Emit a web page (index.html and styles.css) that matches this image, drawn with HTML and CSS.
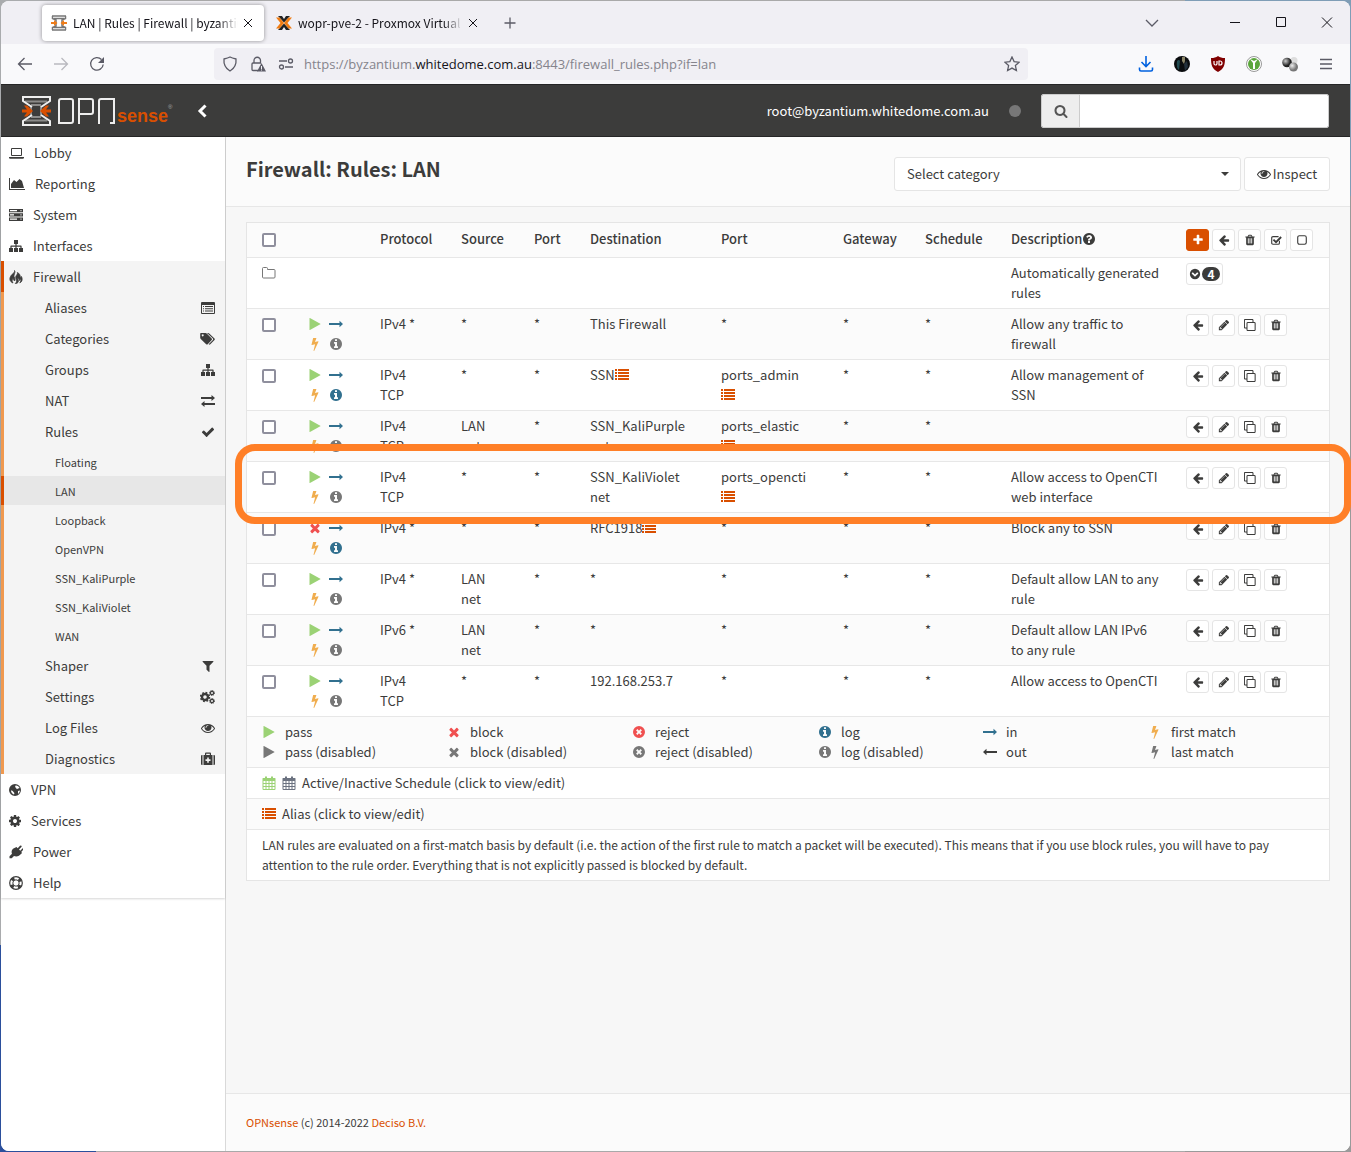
FILE: index.html
```
<!DOCTYPE html>
<html lang="en">
<head>
<meta charset="utf-8">
<title>LAN | Rules | Firewall | byzantium</title>
<link rel="stylesheet" href="styles.css">
</head>
<body>
<svg class="sprite" aria-hidden="true">
  <symbol id="search" viewBox="0 0 1792 1792"><path d="M1216 832q0-185-131.5-316.5t-316.5-131.5-316.5 131.5-131.5 316.5 131.5 316.5 316.5 131.5 316.5-131.5 131.5-316.5zm512 832q0 52-38 90t-90 38q-54 0-90-38l-343-342q-179 124-399 124-143 0-273.5-55.5t-225-150-150-225-55.5-273.5 55.5-273.5 150-225 225-150 273.5-55.5 273.5 55.5 225 150 150 225 55.5 273.5q0 220-124 399l343 343q37 37 37 90z"/></symbol>
  <symbol id="eye" viewBox="0 0 1792 1792"><path d="M1664 960q-152-236-381-353 61 104 61 225 0 185-131.5 316.5t-316.5 131.5-316.5-131.5-131.5-316.5q0-121 61-225-229 117-381 353 133 205 333.5 326.5t434.5 121.5 434.5-121.5 333.5-326.5zm-720-384q0-20-14-34t-34-14q-125 0-214.5 89.5t-89.5 214.5q0 20 14 34t34 14 34-14 14-34q0-86 61-147t147-61q20 0 34-14t14-34zm848 384q0 34-20 69-140 230-376.5 368.5t-499.5 138.5-499.5-139-376.5-368q-20-35-20-69t20-69q140-229 376.5-368t499.5-139 499.5 139 376.5 368q20 35 20 69z"/></symbol>
  <symbol id="check" viewBox="0 0 1792 1792"><path d="M1671 566q0 40-28 68l-724 724-136 136q-28 28-68 28t-68-28l-136-136-362-362q-28-28-28-68t28-68l136-136q28-28 68-28t68 28l294 295 656-657q28-28 68-28t68 28l136 136q28 28 28 68z"/></symbol>
  <symbol id="plus" viewBox="0 0 1792 1792"><path d="M1600 736v192q0 40-28 68t-68 28h-416v416q0 40-28 68t-68 28h-192q-40 0-68-28t-28-68v-416h-416q-40 0-68-28t-28-68v-192q0-40 28-68t68-28h416v-416q0-40 28-68t68-28h192q40 0 68 28t28 68v416h416q40 0 68 28t28 68z"/></symbol>
  <symbol id="left" viewBox="0 0 1792 1792"><path d="M1664 896v128q0 53-32.5 90.5t-84.5 37.5h-704l293 294q38 36 38 90t-38 90l-75 76q-37 37-90 37-52 0-91-37l-651-652q-37-37-37-90 0-52 37-91l651-650q38-38 91-38 52 0 90 38l75 74q38 38 38 91t-38 91l-293 293h704q52 0 84.5 37.5t32.5 90.5z"/></symbol>
  <symbol id="times" viewBox="0 0 1792 1792"><path d="M1490 1322q0 40-28 68l-136 136q-28 28-68 28t-68-28l-294-294-294 294q-28 28-68 28t-68-28l-136-136q-28-28-28-68t28-68l294-294-294-294q-28-28-28-68t28-68l136-136q28-28 68-28t68 28l294 294 294-294q28-28 68-28t68 28l136 136q28 28 28 68t-28 68l-294 294 294 294q28 28 28 68z"/></symbol>
  <symbol id="play" viewBox="0 0 1792 1792"><path d="M1576 927l-1328 738q-23 13-39.5 3t-16.5-36v-1472q0-26 16.5-36t39.5 3l1328 738q23 13 23 31t-23 31z"/></symbol>
  <symbol id="cog" viewBox="128 0 1536 1792"><path d="M1152 896q0-106-75-181t-181-75-181 75-75 181 75 181 181 75 181-75 75-181zm512-109v222q0 12-8 23t-20 13l-185 28q-19 54-39 91 35 50 107 138 10 12 10 25t-9 23q-27 37-99 108t-94 71q-12 0-26-9l-138-108q-44 23-91 38-16 136-29 186-7 28-36 28h-222q-14 0-24.5-8.5t-11.5-21.5l-28-184q-49-16-90-37l-141 107q-10 9-25 9-14 0-25-11-126-114-165-168-7-10-7-23 0-12 8-23 15-21 51-66.5t54-70.5q-27-50-41-99l-183-27q-13-2-21-12.5t-8-23.5v-222q0-12 8-23t19-13l186-28q14-46 39-92-40-57-107-138-10-12-10-24 0-10 9-23 26-36 98.5-107.5t94.5-71.5q13 0 26 10l138 107q44-23 91-38 16-136 29-186 7-28 36-28h222q14 0 24.5 8.5t11.5 21.5l28 184q49 16 90 37l142-107q9-9 24-9 13 0 25 10 129 119 165 170 7 8 7 22 0 12-8 23-15 21-51 66.5t-54 70.5q26 50 41 98l183 28q13 2 21 12.5t8 23.5z"/></symbol>
  <symbol id="filter" viewBox="0 0 1792 1792"><path d="M1595 295q17 41-14 70l-493 493v742q0 42-39 59-13 5-25 5-27 0-45-19l-256-256q-19-19-19-45v-486l-493-493q-31-29-14-70 17-39 59-39h1280q42 0 59 39z"/></symbol>
  <symbol id="pencil" viewBox="0 0 1792 1792"><path d="M491 1536l91-91-235-235-91 91v107h128v128h107zm523-928q0-22-22-22-10 0-17 7l-542 542q-7 7-7 17 0 22 22 22 10 0 17-7l542-542q7-7 7-17zm-54-192l416 416-832 832h-416v-416zm683 96q0 53-37 90l-166 166-416-416 166-165q36-38 90-38 53 0 91 38l235 234q37 39 37 91z"/></symbol>
  <symbol id="trash" viewBox="0 0 1792 1792"><path d="M704 1376v-704q0-14-9-23t-23-9h-64q-14 0-23 9t-9 23v704q0 14 9 23t23 9h64q14 0 23-9t9-23zm256 0v-704q0-14-9-23t-23-9h-64q-14 0-23 9t-9 23v704q0 14 9 23t23 9h64q14 0 23-9t9-23zm256 0v-704q0-14-9-23t-23-9h-64q-14 0-23 9t-9 23v704q0 14 9 23t23 9h64q14 0 23-9t9-23zm-544-992h448l-48-117q-7-9-17-11h-317q-10 2-17 11zm928 32v64q0 14-9 23t-23 9h-96v948q0 83-47 143.5t-113 60.5h-832q-66 0-113-58.5t-47-141.5v-952h-96q-14 0-23-9t-9-23v-64q0-14 9-23t23-9h309l70-167q15-37 54-63t79-26h320q40 0 79 26t54 63l70 167h309q14 0 23 9t9 23z"/></symbol>
  <symbol id="info" viewBox="0 0 1792 1792"><path d="M1152 1376v-160q0-14-9-23t-23-9h-96v-512q0-14-9-23t-23-9h-320q-14 0-23 9t-9 23v160q0 14 9 23t23 9h96v320h-96q-14 0-23 9t-9 23v160q0 14 9 23t23 9h448q14 0 23-9t9-23zm-128-896v-160q0-14-9-23t-23-9h-192q-14 0-23 9t-9 23v160q0 14 9 23t23 9h192q14 0 23-9t9-23zm640 416q0 209-103 385.5t-279.5 279.5-385.5 103-385.5-103-279.5-279.5-103-385.5 103-385.5 279.5-279.5 385.5-103 385.5 103 279.5 279.5 103 385.5z"/></symbol>
  <symbol id="question" viewBox="0 0 1792 1792"><path d="M1024 1376v-192q0-14-9-23t-23-9h-192q-14 0-23 9t-9 23v192q0 14 9 23t23 9h192q14 0 23-9t9-23zm256-672q0-88-55.5-163t-138.5-116-170-41q-243 0-371 213-15 24 8 42l132 100q7 6 19 6 16 0 25-12 53-68 86-92 34-24 86-24 48 0 85.5 26t37.5 59q0 38-20 61t-68 45q-63 28-115.5 86.5t-52.5 125.5v36q0 14 9 23t23 9h192q14 0 23-9t9-23q0-19 21.5-49.5t54.5-49.5q32-18 49-28.5t46-35 44.5-48 28-60.5 12.5-81zm384 192q0 209-103 385.5t-279.5 279.5-385.5 103-385.5-103-279.5-279.5-103-385.5 103-385.5 279.5-279.5 385.5-103 385.5 103 279.5 279.5 103 385.5z"/></symbol>
  <symbol id="bolt" viewBox="0 0 1792 1792"><path d="M1333 566q18 20 7 44l-540 1157q-13 25-42 25-4 0-14-2-17-5-25.5-19t-4.5-30l197-808-406 101q-4 1-12 1-18 0-31-11-18-15-13-39l201-825q4-14 16-23t28-9h328q19 0 32 12.5t13 29.5q0 8-5 18l-171 463 396-98q8-2 12-2 19 0 34 15z"/></symbol>
  <symbol id="circle-x" viewBox="0 0 14 14"><path fill-rule="evenodd" d="M7 1a6 6 0 1 1 0 12A6 6 0 0 1 7 1zM5.4 4.1 4.1 5.4 5.7 7 4.1 8.6l1.3 1.3L7 8.3l1.6 1.6 1.3-1.3L8.3 7l1.6-1.6-1.3-1.3L7 5.7z"/></symbol>
  <symbol id="circle-down" viewBox="0 0 14 14"><path fill-rule="evenodd" d="M7 1a6 6 0 1 1 0 12A6 6 0 0 1 7 1zM3 6.3 7 10.3l4-4-1.4-1.4L7 7.5 4.4 4.9z"/></symbol>
  <symbol id="right-long" viewBox="0 0 14 14"><path d="M0 6h10.5V3.800L14 7l-3.500 3.200V8H0z"/></symbol>
  <symbol id="left-long" viewBox="0 0 14 14"><path d="M14 6H3.500V3.800L0 7l3.500 3.200V8H14z"/></symbol>
  <symbol id="list" viewBox="0 0 14 14"><path d="M0 1h2v2H0zM3 1h11v2H3zM0 4h2v2H0zM3 4h11v2H3zM0 7h2v2H0zM3 7h11v2H3zM0 10h2v2H0zM3 10h11v2H3z"/></symbol>
  <symbol id="calendar" viewBox="0 0 14 14"><path fill-rule="evenodd" d="M1 2h2V.5h2V2h4V.5h2V2h2q.5 0 .5.5V13q0 1-1 1h-11q-1 0-1-1V2.5Q.5 2 1 2zM1.500 5v2h2V5zM4.500 5v2h2V5zM7.500 5v2h2V5zM10.500 5v2h2V5zM1.500 8v2h2V8zM4.500 8v2h2V8zM7.500 8v2h2V8zM10.500 8v2h2V8zM1.500 11v2h2v-2zM4.500 11v2h2v-2zM7.500 11v2h2v-2zM10.500 11v2h2v-2z"/></symbol>
  <symbol id="folder" viewBox="0 0 14 14"><path fill="none" stroke="currentColor" d="M.5 2.500q0-1 1-1h3q1 0 1 1v1h6.500q1 0 1 1v6.500q0 1-1 1H1.500q-1 0-1-1z"/></symbol>
  <symbol id="clone" viewBox="0 0 14 14"><path fill="none" stroke="currentColor" stroke-width="1.2" d="M4.500 4h7.500q1 0 1 1v7.500q0 1-1 1H4.500q-1 0-1-1V5q0-1 1-1zM3.500 10.500h-2q-1 0-1-1V1.500q0-1 1-1h8q1 0 1 1V4"/></symbol>
  <symbol id="square" viewBox="0 0 14 14"><rect x="2" y="2" width="10" height="10" rx="2" fill="none" stroke="currentColor" stroke-width="1.3"/></symbol>
  <symbol id="check-square" viewBox="0 0 14 14"><path fill="none" stroke="currentColor" stroke-width="1.3" d="M11 8v2.500q0 1.500-1.500 1.500h-6Q2 12 2 10.500v-6Q2 3 3.500 3H10"/><path fill="none" stroke="currentColor" stroke-width="2.2" d="m4 6.500 3 3L13 3.500"/></symbol>
  <symbol id="laptop" viewBox="0 0 15 14"><path fill-rule="evenodd" d="M3 2h9q1 0 1 1v6q0 1-1 1H3q-1 0-1-1V3q0-1 1-1zm0 1v6h9V3zM0 11h15v.7q0 1-1.200 1H1.200Q0 12.700 0 11.700z"/></symbol>
  <symbol id="area" viewBox="0 0 16 14"><path d="M0 1h1v11h15v1H0zM2 11V7l3-4 2.500 2L10.500 2 13 4l2 7z"/></symbol>
  <symbol id="server" viewBox="0 0 14 14"><path fill-rule="evenodd" d="M0 1h14v3.300H0zm1 1v1.200h7V2zm10.500 0v1.200h1V2zM0 5.300h14v3.300H0zm1 1v1.200h4V6.300zm10.500 0v1.200h1V6.300zM0 9.600h14v3.300H0zm1 1v1.200h7v-1.200zm10.500 0v1.200h1v-1.200z"/></symbol>
  <symbol id="sitemap" viewBox="0 0 14 14"><path d="M5 1h4v4H7.600v1.500H12q.6 0 .6.6V9H14v4h-4V9h1.400V7.700H7.600V9H9v4H5V9h1.400V7.700H2.600V9H4v4H0V9h1.400V7.100q0-.6.6-.6h4.400V5H5z"/></symbol>
  <symbol id="fire" viewBox="0 0 14 14"><path stroke="currentColor" stroke-width=".8" d="M5.500.5C6.500 2.200 4 3.200 2.500 5-.2 8.500.6 11.600 4 13 2.600 11 3 9 4.500 8c-.3 1.500.3 2 1 3C6.500 10 6 8.500 5 6.500 4.500 4.500 6.800 3 5.500.5zM8.300 2.500C9 4 7.300 5 6.800 6.500 6.300 8.500 8 9.500 7.500 11.500 7.300 12.600 6.700 13.200 6.300 13.500c1.700 0 2.700-.7 3-1.800.5-1.700-.6-2.400-.5-3.700 1 .6 1.700 1.500 1.700 2.500.7-.7.8-1.500.6-2.300C12.200 9.500 12 11.700 10.800 12.800 13.300 11.800 13.700 9 12.500 6.500c-.3.7-.6 1-1.200 1.200C11.500 5.500 10.500 3.300 8.300 2.500z"/></symbol>
  <symbol id="listalt" viewBox="0 0 14 14"><path fill-rule="evenodd" d="M1 1h12q1 0 1 1v10q0 1-1 1H1q-1 0-1-1V2q0-1 1-1zm0 3v8h12V4zm1 1h1v1H2zm2 0h8v1H4zM2 7.200h1v1H2zm2 0h8v1H4zM2 9.400h1v1H2zm2 0h8v1H4z"/></symbol>
  <symbol id="tags" viewBox="0 0 15 14"><path fill-rule="evenodd" d="M1 1h4.500q.8 0 1.500.7l4.700 4.800q.7.8 0 1.500l-4 4.200q-.7.7-1.500 0L1 7.200Q.2 6.500.2 5.500V1.800Q.2 1 1 1zm1.700 1.300a1 1 0 1 0 .01 0z"/><path d="M7 1h1q.8 0 1.500.7l5 4.800q.7.8 0 1.500l-4.200 4.300q-.9.7-1.600-.1l4.200-4.200q.6-.7 0-1.500z"/></symbol>
  <symbol id="exchange" viewBox="0 0 14 14"><path d="M0 3h10.500V1L14 4l-3.500 3V5H0zM14 9H3.500V7L0 10l3.500 3v-2H14z"/></symbol>
  <symbol id="cogs" viewBox="0 0 15 14"><g fill="none" stroke="currentColor"><circle cx="5" cy="7" r="3" stroke-width="2.4"/><circle cx="5" cy="7" r="4.5" stroke-width="1.5" stroke-dasharray="1.8 1.734"/><circle cx="12" cy="3" r="1.6" stroke-width="1.2"/><circle cx="12" cy="3" r="2.5" stroke-dasharray="1.1 .863"/><circle cx="12" cy="11" r="1.6" stroke-width="1.2"/><circle cx="12" cy="11" r="2.5" stroke-dasharray="1.1 .863"/></g></symbol>
  <symbol id="medkit" viewBox="0 0 14 14"><path fill-rule="evenodd" d="M0 4q0-1 1-1h.5v10H1q-1 0-1-1zM2.500 3H4V1.500Q4 .5 5 .5h4q1 0 1 1V3h1.500v10h-9zM5.200 3h3.600V1.700H5.200zm1 2.500v1.700H4.500V9h1.700v1.700h1.600V9h1.700V7.200H7.800V5.500zM12.500 3h.5q1 0 1 1v8q0 1-1 1h-.5z"/></symbol>
  <symbol id="globe" viewBox="0 0 12 14"><path fill-rule="evenodd" d="M6 1a6 6 0 1 1 0 12A6 6 0 0 1 6 1zM6.500 2.500C8 2 10 3.500 10.700 5c-1 .5-2 .3-2.700 1.200C7 5.500 7.500 4.500 6 4.200zM2 7.500c1 .1 1.800.4 2.500 1.500.8.600 1.200 1.200.5 2.500C3.500 11 2 9.500 2 7.500zM9 8l2-.5c-.2 1.500-1 2.700-2 3.500z"/></symbol>
  <symbol id="plug" viewBox="0 0 14 14"><path d="m7.500 2 1.200 1.200L11 .8q.9-.6 1.400 0 .5.7 0 1.300L10 4.500l1.300 1.300L13.400 3.500q.6-.4 1 .1.400.6-.1 1.200L12.200 7l.9.9-.9.900C10.500 11 7.700 12 5 11l-2.300 2.200H.5v-2L3 8.800C2 6.500 3 4 5 3.200z"/></symbol>
  <symbol id="ring" viewBox="0 0 14 14"><g fill="none" stroke="currentColor"><circle cx="7" cy="7" r="6.3" stroke-width="1.2"/><circle cx="7" cy="7" r="3.2" stroke-width="1"/><circle cx="7" cy="7" r="4.7" stroke-width="3" stroke-dasharray="3 4.383" stroke-dashoffset="-2.2"/></g></symbol>
</svg>

<div class="window">
  <div class="tabstrip">
    <div class="tab active">
      <svg class="favicon" viewBox="0 0 16 16"><path fill="none" stroke="#777" stroke-width="1.5" d="M1 1h14M1 15h14M1.500 1v2.500L5 5v6l-3.500 1.500V15M14.500 1v2.500L11 5v6l3.500 1.500V15M3 3.500h10M3 12.500h10"/><path fill="#ef7d1a" d="M0 7h3V5l3.500 3L3 11V9H0zM16 7h-3V5L9.500 8l3.500 3V9h3z"/></svg>
      <span class="title">LAN | Rules | Firewall | byzantium</span>
      <button class="plain close" aria-label="Close tab"><svg viewBox="0 0 10 10"><path d="m1 1 8 8M9 1 1 9"/></svg></button>
    </div>
    <div class="tab">
      <svg class="favicon" viewBox="0 0 16 16"><path fill="#222" d="M2 1h4l2 3 2-3h4L8 7.500zM2 15h4l2-3 2 3h4L8 8.500z"/><path fill="#f07c12" d="M0 2.500h3.500L8 8l-4.500 5.500H0L4.500 8zM16 2.500h-3.500L8 8l4.500 5.500H16L11.500 8z"/></svg>
      <span class="title">wopr-pve-2 - Proxmox Virtual E</span>
      <button class="plain close" aria-label="Close tab"><svg viewBox="0 0 10 10"><path d="m1 1 8 8M9 1 1 9"/></svg></button>
    </div>
    <button class="plain tool" aria-label="New tab"><svg class="line" viewBox="0 0 16 16"><path d="M8 2.500v11M2.500 8h11"/></svg></button>
    <div class="controls">
      <button class="plain list-tabs" aria-label="List all tabs"><svg class="line" viewBox="0 0 16 16"><path d="m2 5 6 6 6-6"/></svg></button>
      <button class="plain" aria-label="Minimize"><svg class="line dark" viewBox="0 0 16 16"><path d="M3 7.500h10"/></svg></button>
      <button class="plain" aria-label="Maximize"><svg class="line dark" viewBox="0 0 16 16"><path d="M3.500 2.500h9v9h-9z"/></svg></button>
      <button class="plain" aria-label="Close"><svg class="line dark" viewBox="0 0 16 16"><path d="m3 2.500 10 10M13 2.500 3 12.500"/></svg></button>
    </div>
  </div>

  <div class="toolbar">
    <button class="plain tool" aria-label="Back"><svg class="line" viewBox="0 0 16 16"><path d="M15 8H1.500M7.500 2 1.500 8l6 6"/></svg></button>
    <button class="plain tool dim" aria-label="Forward"><svg class="line" viewBox="0 0 16 16"><path d="M1 8h13.500M8.500 2l6 6-6 6"/></svg></button>
    <button class="plain tool" aria-label="Reload"><svg class="line" viewBox="0 0 16 16"><path d="M14.200 8.500A6.300 6.300 0 1 1 12.500 3.500"/><path fill="currentColor" stroke="none" d="M15 1v6H9z"/></svg></button>
    <div class="urlbar">
      <svg class="line" viewBox="0 0 16 16"><path d="M8 1c2 1 4 1.500 6 2 .5 5-1 9-6 12-5-3-6.500-7-6-12 2-.5 4-1 6-2z"/></svg>
      <svg class="line" viewBox="0 0 16 16"><path d="M4 7V4.500a3 3 0 0 1 6.500 0V7M8 14.500H3q-1 0-1-1V8q0-1 1-1h8"/><path fill="currentColor" stroke="none" fill-rule="evenodd" d="M11.500 7 16 15.500H7zm-.5 3v3h1v-3zm0 3.500v1h1v-1z"/></svg>
      <svg class="line" viewBox="0 0 16 16"><circle cx="12.500" cy="5" r="2"/><circle cx="3.500" cy="11" r="2"/><path d="M1 5h8M7 11h8"/></svg>
      <span class="url">https://byzantium.<b>whitedome.com.au</b>:8443/firewall_rules.php?if=lan</span>
      <svg class="line" viewBox="0 0 16 16"><path d="m8 1 2.100 4.600 5 .6-3.700 3.400 1 5L8 12.100l-4.400 2.500 1-5L.9 6.200l5-.6z"/></svg>
    </div>
    <button class="plain tool" aria-label="Downloads"><svg class="line blue" viewBox="0 0 16 16"><path d="M8 0v10.500M3.500 6 8 10.500 12.500 6M1.500 11.500v2q0 1.500 1.500 1.500h10q1.500 0 1.500-1.500v-2"/></svg></button>
    <button class="plain tool" aria-label="Account"><svg viewBox="0 0 16 16"><circle cx="8" cy="8" r="8" fill="#0a0c0e"/><path fill="#214a50" d="M3 5q2-2 3 0l-1 9q-3-2-2-9z"/><path fill="#8a8466" d="M8 1h3v4l-1 3-2-3z"/><path fill="#23303b" d="m10 8 3-3 1 6-3 4z"/></svg></button>
    <button class="plain tool" aria-label="uBlock"><svg viewBox="0 0 16 16"><path fill="#800000" d="M8 0c2 1.500 4 2 7 2 0 7-1 11-7 14C2 13 1 9 1 2c3 0 5-.5 7-2z"/><path fill="none" stroke="#fff" stroke-width="1.2" d="M4 5v2.500a1.500 1.500 0 0 0 3 0V5M9 5v4h1a2 2 0 0 0 0-4z"/></svg></button>
    <button class="plain tool" aria-label="Password manager"><svg viewBox="0 0 16 16"><circle cx="8" cy="8" r="7.5" fill="#fff" stroke="#999"/><circle cx="8" cy="8" r="6" fill="#5aa63a"/><path fill="#fff" d="M4 3l3 4v6h2V7l3-4-4 2z"/></svg></button>
    <button class="plain tool" aria-label="Extension"><svg viewBox="0 0 16 16"><defs><radialGradient id="ball" cx=".35" cy=".35"><stop offset="0" stop-color="#ccc"/><stop offset="1" stop-color="#222"/></radialGradient><radialGradient id="pale" cx=".35" cy=".35"><stop offset="0" stop-color="#eee"/><stop offset="1" stop-color="#777"/></radialGradient></defs><circle cx="12" cy="4.500" r="3.500" fill="#ddd"/><circle cx="5" cy="6.500" r="4.800" fill="url(#ball)"/><circle cx="11.500" cy="11" r="4.500" fill="url(#pale)"/></svg></button>
    <button class="plain tool" aria-label="Menu"><svg class="line" viewBox="0 0 16 16"><path d="M2 3.500h12M2 8h12M2 12.500h12"/></svg></button>
  </div>

  <header class="topbar">
    <a class="logo" href="#" aria-label="OPNsense">
      <svg viewBox="0 0 96 32"><g fill="none"><path stroke="#8b8b8a" stroke-width="2" d="M4 6.500h22M4 25.500h22M10 10h10M10 22h10M10 11v10M20 11v10"/><path stroke="#eee" stroke-width="2" d="M11 12 2 6V2h27v4l-9 6M11 20 2 26v4h27v-4l-9-6"/><path stroke="#eee" stroke-width="2" d="M40 4h10q2 0 2 2v20q0 2-2 2H38V6q0-2 2-2M58 29V4h12q2 0 2 2v11q0 2-2 2H59M78 29V6q0-2 2-2h13v24h-4"/></g><path fill="#d94f00" d="M1 14.500h5l-3-4h3l6 5.500-6 5.500H3l3-4H1zM30 14.500h-5l3-4h-3L19 16l6 5.500h3l-3-4h5z"/></svg><span class="sense">sense</span><sup>®</sup>
    </a>
    <button class="plain collapse" aria-label="Collapse menu"><svg viewBox="0 0 10 14"><path d="M8.500 1.500 3 7l5.500 5.500"/></svg></button>
    <span class="user">root@byzantium.whitedome.com.au</span>
    <span class="status"></span>
    <label class="search"><span><svg class="i"><use href="#search"/></svg></span><input type="text" aria-label="Search"></label>
  </header>

  <div class="columns">
    <nav class="sidebar">
      <div class="menu">
        <a href="#"><svg class="i w15"><use href="#laptop"/></svg>Lobby</a>
        <a href="#"><svg class="i w16"><use href="#area"/></svg>Reporting</a>
        <a href="#"><svg class="i"><use href="#server"/></svg>System</a>
        <a href="#"><svg class="i"><use href="#sitemap"/></svg>Interfaces</a>
        <a href="#" class="on"><svg class="i"><use href="#fire"/></svg>Firewall</a>
        <div class="submenu">
          <a href="#">Aliases<svg class="i"><use href="#listalt"/></svg></a>
          <a href="#">Categories<svg class="i w15"><use href="#tags"/></svg></a>
          <a href="#">Groups<svg class="i"><use href="#sitemap"/></svg></a>
          <a href="#">NAT<svg class="i"><use href="#exchange"/></svg></a>
          <a href="#">Rules<svg class="i"><use href="#check"/></svg></a>
          <a href="#" class="leaf">Floating</a>
          <a href="#" class="leaf on">LAN</a>
          <a href="#" class="leaf">Loopback</a>
          <a href="#" class="leaf">OpenVPN</a>
          <a href="#" class="leaf">SSN_KaliPurple</a>
          <a href="#" class="leaf">SSN_KaliViolet</a>
          <a href="#" class="leaf">WAN</a>
          <a href="#">Shaper<svg class="i"><use href="#filter"/></svg></a>
          <a href="#">Settings<svg class="i w15"><use href="#cogs"/></svg></a>
          <a href="#">Log Files<svg class="i"><use href="#eye"/></svg></a>
          <a href="#">Diagnostics<svg class="i"><use href="#medkit"/></svg></a>
        </div>
        <a href="#"><svg class="i w12"><use href="#globe"/></svg>VPN</a>
        <a href="#"><svg class="i w12"><use href="#cog"/></svg>Services</a>
        <a href="#"><svg class="i"><use href="#plug"/></svg>Power</a>
        <a href="#"><svg class="i"><use href="#ring"/></svg>Help</a>
      </div>
    </nav>

    <div class="page">
      <div class="heading">
        <h1>Firewall: Rules: LAN</h1>
        <div class="select"><select aria-label="Category"><option>Select category</option></select><svg viewBox="0 0 8 4"><path d="M0 0h8L4 4z"/></svg></div>
        <button class="inspect"><svg class="i"><use href="#eye"/></svg>Inspect</button>
      </div>

      <main>
        <table class="rules">
          <colgroup><col class="c-check"><col class="c-flags"><col class="c-proto"><col class="c-source"><col class="c-port"><col class="c-dest"><col class="c-dport"><col class="c-gateway"><col class="c-schedule"><col><col class="c-actions"></colgroup>
          <thead>
            <tr>
              <th><input type="checkbox" aria-label="Select all"></th><th></th><th>Protocol</th><th>Source</th><th>Port</th><th>Destination</th><th>Port</th><th>Gateway</th><th>Schedule</th>
              <th class="desc">Description<svg class="i"><use href="#question"/></svg></th>
              <th><div class="btns"><button class="add" aria-label="Add"><svg class="i"><use href="#plus"/></svg></button><button aria-label="Move"><svg class="i"><use href="#left"/></svg></button><button aria-label="Delete"><svg class="i"><use href="#trash"/></svg></button><button aria-label="Enable"><svg class="i"><use href="#check-square"/></svg></button><button aria-label="Disable"><svg class="i"><use href="#square"/></svg></button></div></th>
            </tr>
          </thead>
          <tbody>
            <tr>
              <td><svg class="i muted"><use href="#folder"/></svg></td><td></td><td></td><td></td><td></td><td></td><td></td><td></td><td></td>
              <td class="desc">Automatically generated rules</td>
              <td><div class="btns"><button class="count" aria-label="Show generated rules"><svg class="i"><use href="#circle-down"/></svg><span class="badge">4</span></button></div></td>
            </tr>
            <tr>
              <td><input type="checkbox" aria-label="Select rule"></td>
              <td><div class="flags"><svg class="i pass"><use href="#play"/></svg><svg class="i info"><use href="#right-long"/></svg><svg class="i warn"><use href="#bolt"/></svg><svg class="i muted"><use href="#info"/></svg></div></td>
              <td>IPv4 *</td><td>*</td><td>*</td><td>This Firewall</td><td>*</td><td>*</td><td>*</td>
              <td class="desc">Allow any traffic to firewall</td>
              <td><div class="btns"><button aria-label="Move"><svg class="i"><use href="#left"/></svg></button><button aria-label="Edit"><svg class="i"><use href="#pencil"/></svg></button><button aria-label="Clone"><svg class="i"><use href="#clone"/></svg></button><button aria-label="Delete"><svg class="i"><use href="#trash"/></svg></button></div></td>
            </tr>
            <tr>
              <td><input type="checkbox" aria-label="Select rule"></td>
              <td><div class="flags"><svg class="i pass"><use href="#play"/></svg><svg class="i info"><use href="#right-long"/></svg><svg class="i warn"><use href="#bolt"/></svg><svg class="i info"><use href="#info"/></svg></div></td>
              <td>IPv4<br>TCP</td><td>*</td><td>*</td><td>SSN<svg class="i alias"><use href="#list"/></svg></td><td>ports_admin<br><svg class="i alias"><use href="#list"/></svg></td><td>*</td><td>*</td>
              <td class="desc">Allow management of SSN</td>
              <td><div class="btns"><button aria-label="Move"><svg class="i"><use href="#left"/></svg></button><button aria-label="Edit"><svg class="i"><use href="#pencil"/></svg></button><button aria-label="Clone"><svg class="i"><use href="#clone"/></svg></button><button aria-label="Delete"><svg class="i"><use href="#trash"/></svg></button></div></td>
            </tr>
            <tr>
              <td><input type="checkbox" aria-label="Select rule"></td>
              <td><div class="flags"><svg class="i pass"><use href="#play"/></svg><svg class="i info"><use href="#right-long"/></svg><svg class="i warn"><use href="#bolt"/></svg><svg class="i muted"><use href="#info"/></svg></div></td>
              <td>IPv4<br>TCP</td><td>LAN<br>net</td><td>*</td><td>SSN_KaliPurple<br>net</td><td>ports_elastic<br><svg class="i alias"><use href="#list"/></svg></td><td>*</td><td>*</td>
              <td class="desc"></td>
              <td><div class="btns"><button aria-label="Move"><svg class="i"><use href="#left"/></svg></button><button aria-label="Edit"><svg class="i"><use href="#pencil"/></svg></button><button aria-label="Clone"><svg class="i"><use href="#clone"/></svg></button><button aria-label="Delete"><svg class="i"><use href="#trash"/></svg></button></div></td>
            </tr>
            <tr class="marked">
              <td><input type="checkbox" aria-label="Select rule"><span class="marker"></span></td>
              <td><div class="flags"><svg class="i pass"><use href="#play"/></svg><svg class="i info"><use href="#right-long"/></svg><svg class="i warn"><use href="#bolt"/></svg><svg class="i muted"><use href="#info"/></svg></div></td>
              <td>IPv4<br>TCP</td><td>*</td><td>*</td><td>SSN_KaliViolet<br>net</td><td>ports_opencti<br><svg class="i alias"><use href="#list"/></svg></td><td>*</td><td>*</td>
              <td class="desc">Allow access to OpenCTI web interface</td>
              <td><div class="btns"><button aria-label="Move"><svg class="i"><use href="#left"/></svg></button><button aria-label="Edit"><svg class="i"><use href="#pencil"/></svg></button><button aria-label="Clone"><svg class="i"><use href="#clone"/></svg></button><button aria-label="Delete"><svg class="i"><use href="#trash"/></svg></button></div></td>
            </tr>
            <tr>
              <td><input type="checkbox" aria-label="Select rule"></td>
              <td><div class="flags"><svg class="i block"><use href="#times"/></svg><svg class="i info"><use href="#right-long"/></svg><svg class="i warn"><use href="#bolt"/></svg><svg class="i info"><use href="#info"/></svg></div></td>
              <td>IPv4 *</td><td>*</td><td>*</td><td>RFC1918<svg class="i alias"><use href="#list"/></svg></td><td>*</td><td>*</td><td>*</td>
              <td class="desc">Block any to SSN</td>
              <td><div class="btns"><button aria-label="Move"><svg class="i"><use href="#left"/></svg></button><button aria-label="Edit"><svg class="i"><use href="#pencil"/></svg></button><button aria-label="Clone"><svg class="i"><use href="#clone"/></svg></button><button aria-label="Delete"><svg class="i"><use href="#trash"/></svg></button></div></td>
            </tr>
            <tr>
              <td><input type="checkbox" aria-label="Select rule"></td>
              <td><div class="flags"><svg class="i pass"><use href="#play"/></svg><svg class="i info"><use href="#right-long"/></svg><svg class="i warn"><use href="#bolt"/></svg><svg class="i muted"><use href="#info"/></svg></div></td>
              <td>IPv4 *</td><td>LAN<br>net</td><td>*</td><td>*</td><td>*</td><td>*</td><td>*</td>
              <td class="desc">Default allow LAN to any rule</td>
              <td><div class="btns"><button aria-label="Move"><svg class="i"><use href="#left"/></svg></button><button aria-label="Edit"><svg class="i"><use href="#pencil"/></svg></button><button aria-label="Clone"><svg class="i"><use href="#clone"/></svg></button><button aria-label="Delete"><svg class="i"><use href="#trash"/></svg></button></div></td>
            </tr>
            <tr>
              <td><input type="checkbox" aria-label="Select rule"></td>
              <td><div class="flags"><svg class="i pass"><use href="#play"/></svg><svg class="i info"><use href="#right-long"/></svg><svg class="i warn"><use href="#bolt"/></svg><svg class="i muted"><use href="#info"/></svg></div></td>
              <td>IPv6 *</td><td>LAN<br>net</td><td>*</td><td>*</td><td>*</td><td>*</td><td>*</td>
              <td class="desc">Default allow LAN IPv6 to any rule</td>
              <td><div class="btns"><button aria-label="Move"><svg class="i"><use href="#left"/></svg></button><button aria-label="Edit"><svg class="i"><use href="#pencil"/></svg></button><button aria-label="Clone"><svg class="i"><use href="#clone"/></svg></button><button aria-label="Delete"><svg class="i"><use href="#trash"/></svg></button></div></td>
            </tr>
            <tr>
              <td><input type="checkbox" aria-label="Select rule"></td>
              <td><div class="flags"><svg class="i pass"><use href="#play"/></svg><svg class="i info"><use href="#right-long"/></svg><svg class="i warn"><use href="#bolt"/></svg><svg class="i muted"><use href="#info"/></svg></div></td>
              <td>IPv4<br>TCP</td><td>*</td><td>*</td><td>192.168.253.7</td><td>*</td><td>*</td><td>*</td>
              <td class="desc">Allow access to OpenCTI</td>
              <td><div class="btns"><button aria-label="Move"><svg class="i"><use href="#left"/></svg></button><button aria-label="Edit"><svg class="i"><use href="#pencil"/></svg></button><button aria-label="Clone"><svg class="i"><use href="#clone"/></svg></button><button aria-label="Delete"><svg class="i"><use href="#trash"/></svg></button></div></td>
            </tr>
          </tbody>
          <tfoot>
            <tr><td colspan="11">
              <ul class="legend">
                <li><svg class="i pass"><use href="#play"/></svg>pass</li>
                <li><svg class="i muted"><use href="#play"/></svg>pass (disabled)</li>
                <li><svg class="i block"><use href="#times"/></svg>block</li>
                <li><svg class="i muted"><use href="#times"/></svg>block (disabled)</li>
                <li><svg class="i block"><use href="#circle-x"/></svg>reject</li>
                <li><svg class="i muted"><use href="#circle-x"/></svg>reject (disabled)</li>
                <li><svg class="i info"><use href="#info"/></svg>log</li>
                <li><svg class="i muted"><use href="#info"/></svg>log (disabled)</li>
                <li><svg class="i info"><use href="#right-long"/></svg>in</li>
                <li><svg class="i"><use href="#left-long"/></svg>out</li>
                <li><svg class="i warn"><use href="#bolt"/></svg>first match</li>
                <li><svg class="i muted"><use href="#bolt"/></svg>last match</li>
              </ul>
            </td></tr>
            <tr><td colspan="11"><div class="key"><svg class="i pass"><use href="#calendar"/></svg><svg class="i slate"><use href="#calendar"/></svg>Active/Inactive Schedule (click to view/edit)</div></td></tr>
            <tr><td colspan="11"><div class="key"><svg class="i alias"><use href="#list"/></svg>Alias (click to view/edit)</div></td></tr>
            <tr><td colspan="11" class="note">LAN rules are evaluated on a first-match basis by default (i.e. the action of the first rule to match a packet will be executed). This means that if you use block rules, you will have to pay<br>attention to the rule order. Everything that is not explicitly passed is blocked by default.</td></tr>
          </tfoot>
        </table>
      </main>

      <footer><a href="#">OPNsense</a> (c) 2014-2022 <a href="#">Deciso B.V.</a></footer>
    </div>
  </div>
</div>
</body>
</html>
```
FILE: styles.css
```
* { box-sizing: border-box; }

body {
  margin: 0;
  min-height: 100vh;
  display: flex;
  padding: 1px;
  background: linear-gradient(#a9abad 82%, #2b4f9c 82%) left / 96px 100% no-repeat,
    linear-gradient(#7f9db6 17%, #9a9a9a 17%) right / 166px 100% no-repeat,
    #a9a9a9;
  color: #3c3c3b;
  font: 13px/20px "Noto Sans CJK JP", "Open Sans", sans-serif;
}

a { color: inherit; text-decoration: none; }
button, input, select { font: inherit; color: inherit; }
.sprite { position: absolute; width: 0; height: 0; }

.window {
  flex: 1;
  min-width: 0;
  display: flex;
  flex-direction: column;
  border-radius: 8px;
  background: #fff;
}

/* icons */
.i { width: 14px; height: 14px; flex: none; fill: currentColor; vertical-align: -2px; }
.w12 { width: 12px; }
.w15 { width: 15px; }
.w16 { width: 16px; }
.pass { color: #9bd275; }
.block { color: #f05050; }
.info { color: #31708f; }
.warn { color: #f0ad4e; }
.muted { color: #777; }
.slate { color: #6b7280; }
.alias { color: #d94f00; }

.plain {
  display: flex;
  flex: none;
  align-items: center;
  justify-content: center;
  padding: 0;
  border: 0;
  background: none;
}
.plain svg { width: 16px; height: 16px; }
.line { flex: none; width: 16px; height: 16px; fill: none; stroke: currentColor; stroke-width: 1.3; }

/* browser chrome */
.tabstrip, .toolbar {
  display: flex;
  align-items: center;
  font-family: "Open Sans", sans-serif;
  color: #5b5b66;
}
.tabstrip {
  height: 43px;
  padding-left: 41px;
  gap: 3px;
  border-radius: 8px 8px 0 0;
  background: #f0eff4;
}
.tab {
  display: flex;
  align-items: center;
  gap: 6px;
  width: 222px;
  height: 36px;
  padding: 0 6px 0 9px;
  border-radius: 4px;
  font: 12px/20px "Noto Sans CJK JP", "Open Sans", sans-serif;
  color: #15141a;
}
.tab.active { background: #fff; box-shadow: 0 0 4px rgba(0, 0, 0, .4); }
.favicon { width: 16px; height: 16px; flex: none; }
.title {
  flex: 1;
  min-width: 0;
  margin-right: -6px;
  overflow: hidden;
  white-space: nowrap;
  mask-image: linear-gradient(to left, transparent, #000 20px);
}
.close { width: 20px; height: 20px; }
.plain.close svg { width: 10px; height: 10px; fill: none; stroke: #15141a; }
.tool { width: 36px; height: 32px; }
.controls { display: flex; margin-left: auto; color: #5b5b66; }
.controls .plain { width: 46px; height: 32px; }
.controls .list-tabs { margin-right: 37px; }
.dark { color: #15141a; stroke-width: 1; }

.toolbar { height: 40px; padding: 0 6px; background: #f9f9fb; }
.dim { opacity: .4; }
.urlbar {
  flex: 1;
  display: flex;
  align-items: center;
  gap: 12px;
  height: 32px;
  margin: 0 100px 0 99px;
  padding: 0 8px;
  border-radius: 4px;
  background: #f0eff4;
}
.url { flex: 1; margin-left: -2px; color: #85848c; }
.url b { font-weight: 400; color: #15141a; }
.blue { color: #0061e0; stroke-width: 1.6; }

/* application header */
.topbar {
  display: flex;
  align-items: center;
  height: 53px;
  padding: 0 21px 0 20px;
  border: solid #262626;
  border-width: 1px 0;
  background: #3c3c3b;
  color: #fff;
}
.logo { display: flex; align-items: flex-end; height: 32px; }
.logo svg { width: 96px; height: 32px; }
.sense {
  font: bold 18px/22px "Liberation Sans", sans-serif;
  color: #d94f00;
}
.logo sup { align-self: flex-start; font: 6px/24px "Liberation Sans", sans-serif; color: #aaa; }
.collapse { width: 20px; height: 32px; margin-left: 20px; }
.plain.collapse svg { width: 10px; height: 14px; fill: none; stroke: #fff; stroke-width: 3; }
.user { margin-left: auto; }
.status { width: 12px; height: 12px; margin: 0 20px; border-radius: 50%; background: #777; }
.search { display: flex; width: 288px; height: 34px; border: 1px solid #ccc; border-radius: 2px; overflow: hidden; }
.search span {
  display: flex;
  align-items: center;
  justify-content: center;
  width: 38px;
  border-right: 1px solid #ccc;
  background: #eee;
  color: #555;
}
.search input { flex: 1; min-width: 0; padding: 0 12px; border: 0; background: #fff; color: #555; }

.columns { flex: 1; display: flex; }

/* sidebar */
.sidebar { flex: 0 0 225px; border-right: 1px solid #d9d9d9; border-radius: 0 0 0 8px; background: #fff; }
.menu { box-shadow: 0 1px 2px rgba(0, 0, 0, .16); }
.menu a { display: flex; align-items: center; gap: 10px; height: 31px; padding-left: 8px; }
.menu a.on { padding-left: 5px; border-left: 3px solid #d94f00; background: #f4f4f4; }
.menu .submenu { border-left: 3px solid #f0994f; background: #f4f4f4; }
.menu .submenu a { justify-content: space-between; padding: 0 10px 0 41px; }
.menu .submenu a.leaf { height: 29px; padding-left: 51px; font-size: 11px; }
.menu .submenu a.leaf.on { margin-left: -3px; background: #e7e7e7; }

/* page */
.page { flex: 1; min-width: 0; display: flex; flex-direction: column; background: #f7f7f7; border-radius: 0 0 8px 0; }
.heading {
  display: flex;
  gap: 3px;
  padding: 20px 20px 15px;
  border-bottom: 1px solid #e7e7e7;
  background: #fbfbfb;
}
h1 { flex: 1; margin: 0; font-size: 20px; line-height: 24px; font-weight: 700; }
.select { position: relative; width: 347px; }
.select select {
  width: 100%;
  height: 34px;
  padding: 0 12px;
  appearance: none;
  border: 1px solid #e5e5e5;
  border-radius: 3px;
  background: #fff;
}
.select svg { position: absolute; right: 12px; top: 15px; width: 8px; height: 4px; fill: currentColor; }
.inspect {
  display: flex;
  align-items: center;
  justify-content: center;
  gap: 2px;
  width: 86px;
  height: 34px;
  padding: 0;
  border: 1px solid #e5e5e5;
  border-radius: 3px;
  background: #fff;
}

main { flex: 1; padding: 15px 20px; }

.rules {
  width: 100%;
  table-layout: fixed;
  border: 1px solid #e5e5e5;
  border-spacing: 0;
  background: #fff;
}
.c-check { width: 53px; }
.c-flags { width: 72px; }
.c-proto { width: 81px; }
.c-source { width: 73px; }
.c-port { width: 56px; }
.c-dest { width: 131px; }
.c-dport { width: 122px; }
.c-gateway { width: 82px; }
.c-schedule { width: 86px; }
.c-actions { width: 151px; }

th, td { padding: 5px 8px; text-align: left; vertical-align: top; font-weight: 400; }
th { padding: 6px 8px; font-weight: 500; white-space: nowrap; }
td { height: 51px; border-top: 1px solid #e7e7e7; }
th:first-child, td:first-child { padding-left: 15px; }
td.desc { padding-right: 16px; }
thead tr, tbody tr:nth-child(even), tfoot tr:nth-child(odd) { background: #fbfbfb; }
tfoot tr:last-child { background: #fff; }
tfoot td { height: auto; }

input[type="checkbox"] {
  display: block;
  width: 14px;
  height: 14px;
  margin: 4px 0 0;
  appearance: none;
  border: 2px solid #8f8f9d;
  border-radius: 2px;
  background: #fff;
}
.flags { display: grid; grid-template-columns: 14px 14px; grid-auto-rows: 20px; column-gap: 7px; align-items: center; }

.btns { display: flex; gap: 3px; }
.btns button {
  display: flex;
  align-items: center;
  justify-content: center;
  width: 23px;
  height: 22px;
  padding: 0;
  border: 1px solid #e5e5e5;
  border-radius: 3px;
  background: #fff;
}
.btns .i { width: 12px; height: 12px; }
.btns button.add { border-color: #d94f00; background: #d94f00; color: #fff; }
.btns button.count { width: 37px; gap: 1px; }
.badge {
  padding: 0 5px;
  border-radius: 7px;
  background: #3c3c3b;
  color: #fff;
  font-size: 12px;
  line-height: 14px;
  font-weight: 700;
}

.marked { position: relative; }
.marker {
  position: absolute;
  inset: -17px -22px -12px -12px;
  border: 7px solid #ff7f27;
  border-radius: 20px;
  pointer-events: none;
}

.legend {
  display: grid;
  grid-template: 20px 20px / 185fr 185fr 186fr 165fr 165fr 173fr;
  grid-auto-flow: column;
  margin: 0;
  padding: 0;
  list-style: none;
}
.legend li { display: flex; align-items: center; gap: 9px; }
.key { display: flex; align-items: center; gap: 6px; }
.note { font-size: 12px; }

footer {
  height: 58px;
  padding: 18px 20px;
  border-top: 1px solid #e7e7e7;
  border-radius: 0 0 8px 0;
  background: #fbfbfb;
  font-size: 11px;
}
footer a { color: #d94f00; }
```
